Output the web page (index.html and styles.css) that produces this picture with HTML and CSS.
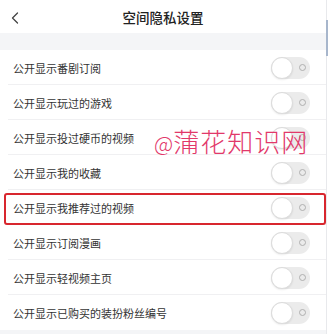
FILE: index.html
```html
<!DOCTYPE html>
<html lang="zh-CN">
<head>
<meta charset="utf-8">
<title>空间隐私设置</title>
<link rel="stylesheet" href="styles.css">
</head>
<body>
<div class="page">
  <div class="main">
    <div class="header">
      <div class="back">
        <svg width="8" height="12" viewBox="0 0 8 12"><polyline points="6.5,1 1.5,6 6.5,11" fill="none" stroke="#444" stroke-width="1.3" stroke-linejoin="round" stroke-linecap="round"/></svg>
      </div>
      <div class="title">空间隐私设置</div>
      <div></div>
    </div>
    <div class="band"></div>
    <div class="list">
      <div class="row"><span class="label">公开显示番剧订阅</span><span class="toggle"><span class="knob"></span><span class="ring"></span></span></div>
      <div class="row"><span class="label">公开显示玩过的游戏</span><span class="toggle"><span class="knob"></span><span class="ring"></span></span></div>
      <div class="row"><span class="label">公开显示投过硬币的视频</span><span class="toggle"><span class="knob"></span><span class="ring"></span></span></div>
      <div class="row"><span class="label">公开显示我的收藏</span><span class="toggle"><span class="knob"></span><span class="ring"></span></span></div>
      <div class="row highlight"><span class="label">公开显示我推荐过的视频</span><span class="toggle"><span class="knob"></span><span class="ring"></span></span></div>
      <div class="row"><span class="label">公开显示订阅漫画</span><span class="toggle"><span class="knob"></span><span class="ring"></span></span></div>
      <div class="row"><span class="label">公开显示轻视频主页</span><span class="toggle"><span class="knob"></span><span class="ring"></span></span></div>
      <div class="row last"><span class="label">公开显示已购买的装扮粉丝编号</span><span class="toggle"><span class="knob"></span><span class="ring"></span></span></div>
    </div>
    <div class="band bottom"></div>
  </div>
  <div class="scroll-thumb"></div>
  <div class="watermark"><span class="at">@</span>蒲花知识网</div>
</div>
</body>
</html>
```

FILE: styles.css
```css
* { box-sizing: border-box; }
html, body { margin: 0; padding: 0; background: #fff; }
body {
  font-family: "Noto Sans CJK SC", "Noto Sans", sans-serif;
  color: #333;
  overflow: hidden;
}
.page {
  position: relative;
  width: 329px;
  height: 334px;
  overflow: hidden;
}
.main {
  width: 327px;
  border-right: 1px solid #e8e9ec;
  height: 334px;
}
.header {
  height: 33px;
  display: grid;
  grid-template-columns: 1fr auto 1fr;
  align-items: center;
}
.back {
  padding-left: 11px;
  display: flex;
  align-items: center;
  padding-top: 2px;
}
.title {
  font-size: 13.5px;
  font-weight: 500;
  color: #222;
  padding-top: 1px;
}
.band {
  height: 17px;
  background: #f4f5f7;
}
.band.bottom { height: 10px; }
.list { background: #fff; }
.row {
  position: relative;
  height: 35px;
  display: flex;
  align-items: center;
  justify-content: space-between;
  padding: 0 16px 0 13px;
}
.row::before {
  content: "";
  position: absolute;
  left: 8px;
  right: 0;
  bottom: 0;
  height: 1px;
  background: #f0f0f2;
}
.row.last::before { display: none; }
.label {
  font-size: 11px;
  color: #333;
}
.toggle {
  position: relative;
  width: 39px;
  height: 22px;
  border-radius: 11px;
  background: #ebebeb;
  display: flex;
  align-items: center;
}
.knob {
  width: 22px;
  height: 22px;
  border-radius: 50%;
  background: #fff;
  border: 1px solid #dcdcdc;
  box-shadow: 0 1px 2px rgba(0,0,0,0.08);
}
.ring {
  position: absolute;
  right: 4px;
  top: 7.5px;
  width: 7px;
  height: 7px;
  border-radius: 50%;
  border: 1.3px solid #b0b0b0;
}
.row.highlight::after {
  content: "";
  position: absolute;
  left: 4px;
  right: 0;
  top: 3px;
  bottom: 0;
  border: 2px solid #d8262e;
  border-radius: 3px;
}
.scroll-thumb {
  position: absolute;
  left: 326px;
  top: 20px;
  width: 1.5px;
  height: 36px;
  background: #a7b6cc;
}
.watermark {
  position: absolute;
  left: 154px;
  top: 123px;
  font-family: "Noto Sans CJK SC", sans-serif;
  font-weight: 300;
  font-size: 26px;
  letter-spacing: 1px;
  color: #e2386a;
  line-height: 36px;
  white-space: nowrap;
}
.watermark .at {
  font-size: 21px;
  letter-spacing: 0;
}
```
